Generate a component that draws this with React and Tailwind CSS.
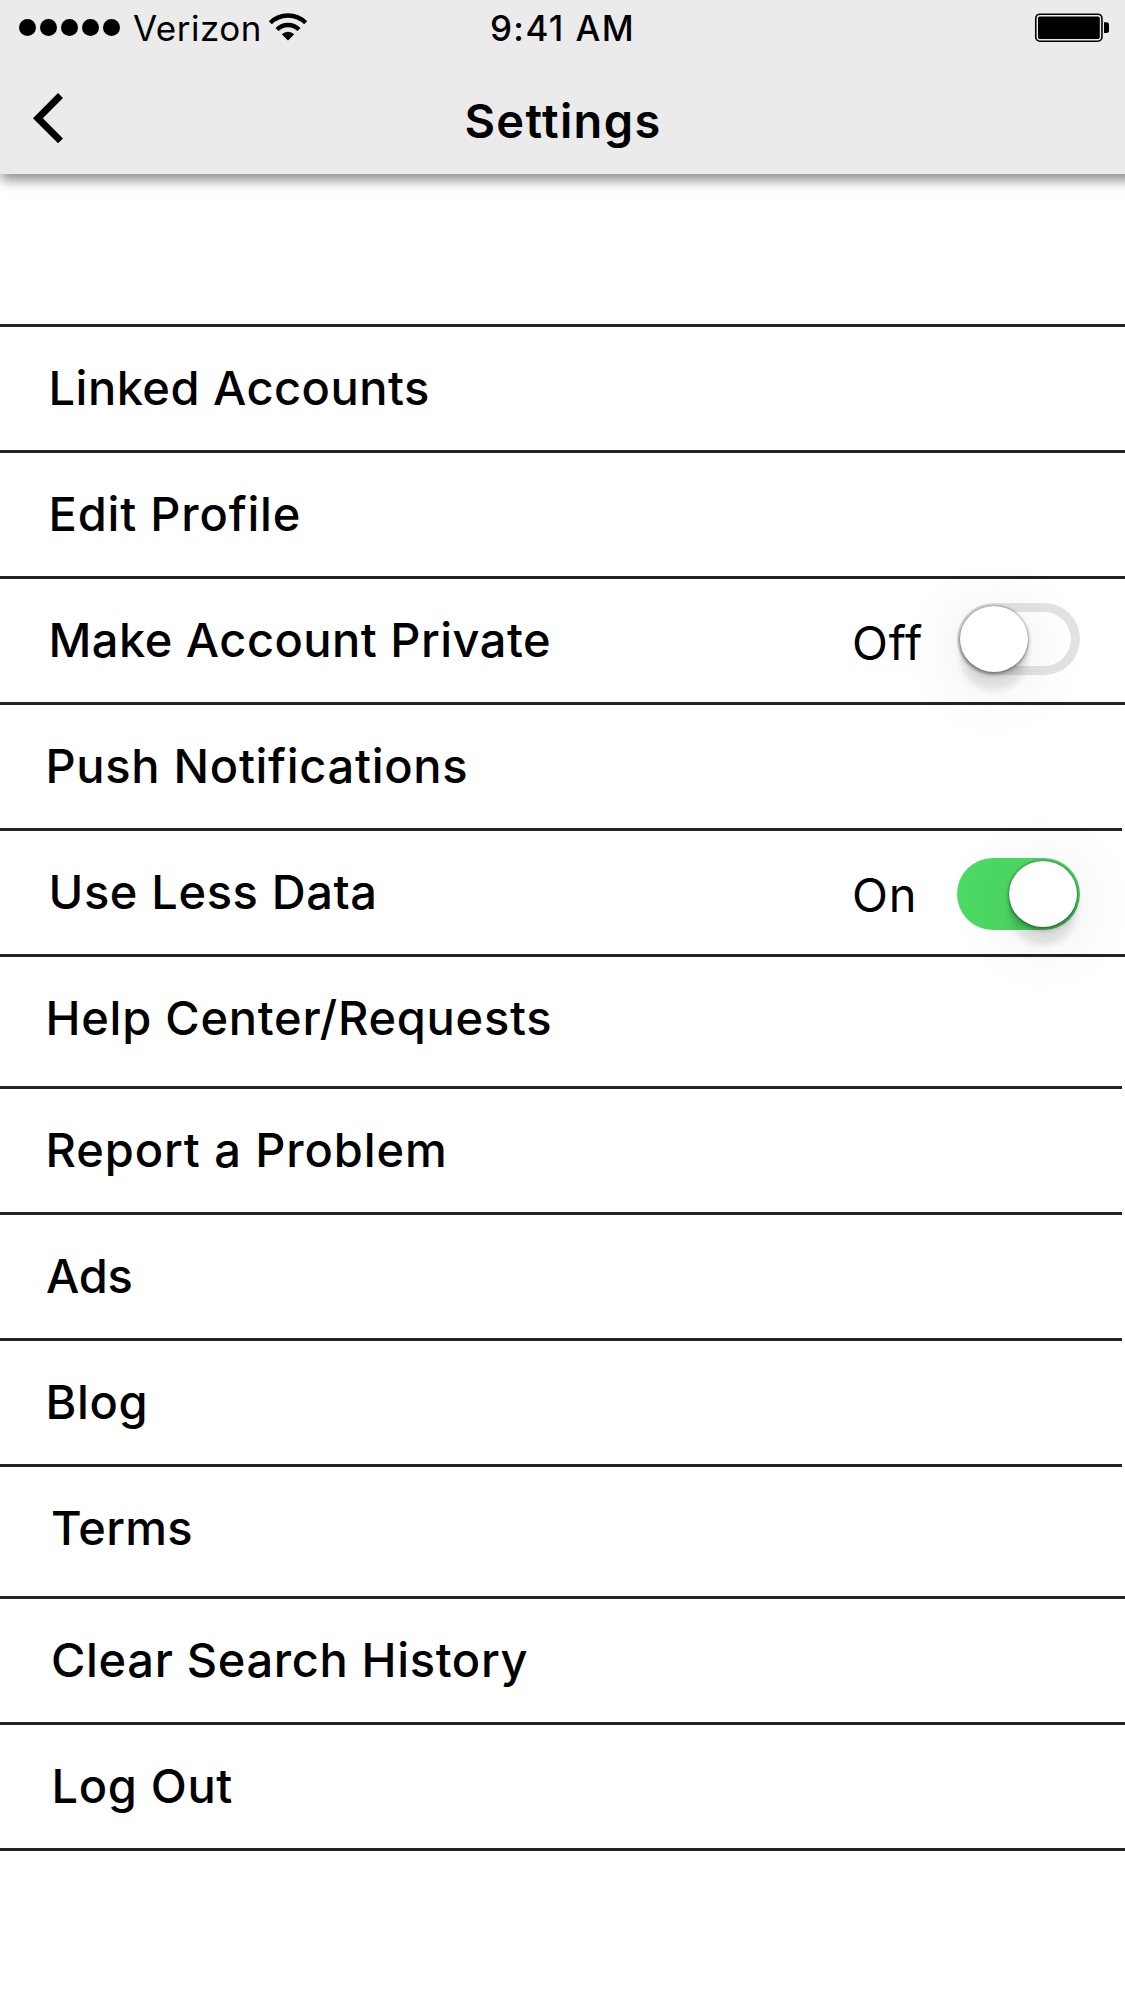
const ROWS = [
  { label: "Linked Accounts", text: "pl-[48.5px] tracking-[0.48px]" },
  { label: "Edit Profile", text: "pl-[48.5px] tracking-[0.82px]" },
  { label: "Make Account Private", text: "pl-[48.5px] tracking-[0.48px]", toggle: "off" },
  { label: "Push Notifications", text: "pl-[45.5px] tracking-[0.7px]" },
  { label: "Use Less Data", text: "pl-[48.5px] tracking-[0.62px]", toggle: "on", shortLine: true },
  { label: "Help Center/Requests", text: "pl-[45.5px] tracking-[0.74px]", tall: true },
  { label: "Report a Problem", text: "pl-[45.5px] tracking-[0.9px]", shortLine: true },
  { label: "Ads", text: "pl-[46px] tracking-[-0.2px]", shortLine: true },
  { label: "Blog", text: "pl-[45.5px] tracking-[0.6px]", shortLine: true },
  { label: "Terms", text: "pl-[51px] tracking-[0.3px]", tall: true, shortLine: true },
  { label: "Clear Search History", text: "pl-[51px] tracking-[0.65px]" },
  { label: "Log Out", text: "pl-[51.5px] tracking-[0.65px]" },
];

function WifiIcon() {
  return (
    <svg className="-mt-[3px] ml-[6px] h-[30px] w-[40px]" viewBox="0 0 40 30" fill="none">
      <path d="M2.3 10.8A25 25 0 0 1 37.7 10.8" stroke="#000" strokeWidth="4.4" />
      <path d="M9 17.5A15.6 15.6 0 0 1 31 17.5" stroke="#000" strokeWidth="4.4" />
      <path d="M20 28.5L13.8 22.3A8.8 8.8 0 0 1 26.2 22.3Z" fill="#000" />
    </svg>
  );
}

function BatteryIcon() {
  return (
    <svg className="h-[31px] w-[76px]" viewBox="0 0 76 31">
      <rect x="1.75" y="2.2" width="66.2" height="27" rx="4.2" fill="none" stroke="#000" strokeWidth="1.6" />
      <rect x="4" y="4.5" width="61.8" height="22.5" rx="1.8" fill="#000" />
      <path d="M70 10.200H72.500Q75 10.200 75 12.700V18.500Q75 21 72.500 21H70Z" fill="#000" />
    </svg>
  );
}

function StatusBar() {
  return (
    <div className="grid h-[57px] grid-cols-3 text-[35px] leading-[57px]">
      <div className="flex items-center pl-[19px]">
        <div className="flex gap-[4px]">
          {[0, 1, 2, 3, 4].map((i) => (
            <span key={i} className="-mt-[2px] size-[17px] rounded-full bg-black" />
          ))}
        </div>
        <span className="ml-[13px] tracking-[0.5px]">Verizon</span>
        <WifiIcon />
      </div>
      <div className="text-center font-medium tracking-[1.4px]">9:41 AM</div>
      <div className="flex items-start justify-end pt-[12px] pr-[15px]">
        <BatteryIcon />
      </div>
    </div>
  );
}

function NavBar() {
  return (
    <div className="grid h-[117px] grid-cols-3">
      <button className="flex items-start pt-[35px] pl-[32px]" aria-label="Back">
        <svg className="h-[52px] w-[33px]" viewBox="0 0 33 52" fill="none">
          <path d="M28.500 3.500L5.900 26.200L28.500 48.900" stroke="#000" strokeWidth="7" />
        </svg>
      </button>
      <h1 className="pt-[34px] pl-[1px] text-center text-[47px] leading-[60px] font-semibold tracking-[1.35px]">
        Settings
      </h1>
    </div>
  );
}

const KNOB_SHADOW =
  "shadow-[0_0_2px_1px_rgba(0,0,0,0.26),0_3px_5px_rgba(0,0,0,0.28),0_19px_7px_-1px_rgba(0,0,0,0.1),0_10px_60px_14px_rgba(0,0,0,0.06)]";

function Toggle({ on }) {
  return (
    <span
      className={
        on
          ? "flex h-[72px] w-[123px] items-start justify-end rounded-full bg-[#4cd964] pt-[3px] pr-[3px]"
          : "flex h-[72px] w-[123px] items-start rounded-full pt-[3px] pl-[3px] inset-ring-[9px] inset-ring-[#e3e3e3]"
      }
    >
      <span className={`h-[66px] w-[68px] rounded-[50%] bg-white ${KNOB_SHADOW}`} />
    </span>
  );
}

function Row({ label, text, toggle, tall, shortLine }) {
  const on = toggle === "on";
  return (
    <li className={tall ? "h-[132px]" : "h-[126px]"}>
      <div className={shortLine ? "mr-[3px] h-[3px] bg-[#242324]" : "h-[3px] bg-[#242324]"} />
      <div className="flex items-start justify-between">
        <span className={`pt-[31px] font-medium ${text}`}>{label}</span>
        {toggle && (
          <div className="flex items-start">
            <span className="w-[105px] pt-[34px] tracking-[0.8px]">{on ? "On" : "Off"}</span>
            <div className={on ? "pt-[27px] pr-[45px]" : "pt-[24px] pr-[45px]"}>
              <Toggle on={on} />
            </div>
          </div>
        )}
      </div>
    </li>
  );
}

export default function App() {
  return (
    <div className="h-[2001px] w-[1125px] overflow-hidden bg-white font-[Inter,sans-serif] text-black">
      <header className="h-[174px] w-[1145px] bg-[#ebebeb] pr-[20px] shadow-[1px_6px_12px_rgba(0,0,0,0.46)]">
        <StatusBar />
        <NavBar />
      </header>
      <ul className="mt-[150px] border-b-[3px] border-[#242324] text-[47px] leading-[60px]">
        {ROWS.map((row) => (
          <Row key={row.label} {...row} />
        ))}
      </ul>
    </div>
  );
}
